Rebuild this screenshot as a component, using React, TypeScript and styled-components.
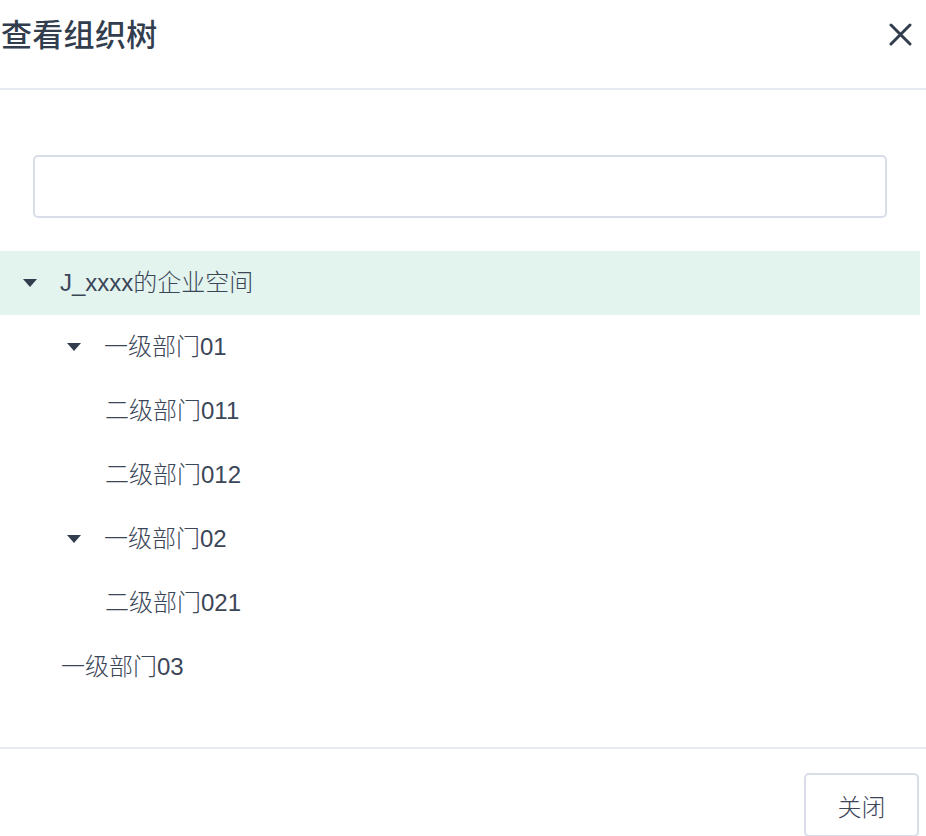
import React from "react";
import styled, { createGlobalStyle } from "styled-components";

const Global = createGlobalStyle`
  html, body { margin: 0; padding: 0; background: #fff; }
  body { font-family: "Liberation Sans", "Noto Sans CJK SC", sans-serif; color: #3b4658; }
  * { box-sizing: border-box; }
`;

const Dialog = styled.div`
  width: 926px;
  height: 836px;
  display: flex;
  flex-direction: column;
  overflow: hidden;
  background: #fff;
`;

const Header = styled.div`
  height: 90px;
  flex: none;
  display: flex;
  align-items: flex-start;
  justify-content: space-between;
  border-bottom: 2px solid #e6e9ef;
  padding: 0 14px 0 1px;
`;

const Title = styled.h1`
  margin: 0;
  font-family: "Noto Sans CJK SC", sans-serif;
  font-size: 31px;
  font-weight: 500;
  line-height: 66px;
  color: #323d4e;
  letter-spacing: 0.3px;
`;

const CloseBtn = styled.button`
  border: 0;
  background: none;
  padding: 0;
  margin-top: 22px;
  width: 24px;
  height: 24px;
  display: flex;
  align-items: center;
  justify-content: center;
  cursor: pointer;
`;

const Body = styled.div`
  flex: 1;
  padding: 65px 6px 0 0;
  display: flex;
  flex-direction: column;
`;

const SearchInput = styled.input`
  margin: 0 33px;
  height: 63px;
  border: 2px solid #d8dde7;
  border-radius: 5px;
  outline: none;
  font-size: 24px;
  font-family: inherit;
  padding: 0 16px;
`;

const Tree = styled.div`
  margin-top: 33px;
  display: flex;
  flex-direction: column;
`;

const Row = styled.div<{ $selected?: boolean; $pad: number }>`
  height: 64px;
  display: flex;
  align-items: center;
  padding-left: ${(p) => p.$pad}px;
  background: ${(p) => (p.$selected ? "#e3f4ee" : "transparent")};
  font-size: 24px;
  font-weight: 300;
  color: #3b4658;
`;

const Switcher = styled.span`
  width: 37px;
  flex: none;
  display: flex;
  align-items: center;
`;

const Label = styled.span`
  line-height: 64px;
  white-space: nowrap;
`;

const Footer = styled.div`
  height: 89px;
  flex: none;
  border-top: 2px solid #e6e9ef;
  display: flex;
  justify-content: flex-end;
  align-items: flex-start;
  padding: 24px 7px 0 0;
`;

const Button = styled.button`
  width: 115px;
  height: 64px;
  border: 2px solid #d8dde7;
  border-radius: 5px;
  background: #fff;
  font-family: inherit;
  font-size: 24px;
  font-weight: 300;
  color: #3b4658;
  cursor: pointer;
`;

const Caret = () => (
  <svg width="14" height="8" viewBox="0 0 14 8">
    <path d="M0 0 H14 L7 8 Z" fill="#323d4e" />
  </svg>
);

type Node = { label: string; level: number; leaf: boolean; selected?: boolean };

const nodes: Node[] = [
  { label: "J_xxxx的企业空间", level: 0, leaf: false, selected: true },
  { label: "一级部门01", level: 1, leaf: false },
  { label: "二级部门011", level: 2, leaf: true },
  { label: "二级部门012", level: 2, leaf: true },
  { label: "一级部门02", level: 1, leaf: false },
  { label: "二级部门021", level: 2, leaf: true },
  { label: "一级部门03", level: 1, leaf: true },
];

export default function App() {
  return (
    <>
      <Global />
      <Dialog>
        <Header>
          <Title>查看组织树</Title>
          <CloseBtn aria-label="close">
            <svg width="23" height="23" viewBox="0 0 23 23">
              <path d="M2 2 L21 21 M21 2 L2 21" stroke="#323d4e" strokeWidth="3" strokeLinecap="round" />
            </svg>
          </CloseBtn>
        </Header>
        <Body>
          <SearchInput />
          <Tree>
            {nodes.map((n, i) => (
              <Row key={i} $selected={n.selected} $pad={n.leaf ? (n.level - 1) * 44 + 61 : n.level * 44 + 23}>
                {!n.leaf && (
                  <Switcher>
                    <Caret />
                  </Switcher>
                )}
                <Label>{n.label}</Label>
              </Row>
            ))}
          </Tree>
        </Body>
        <Footer>
          <Button>关闭</Button>
        </Footer>
      </Dialog>
    </>
  );
}
